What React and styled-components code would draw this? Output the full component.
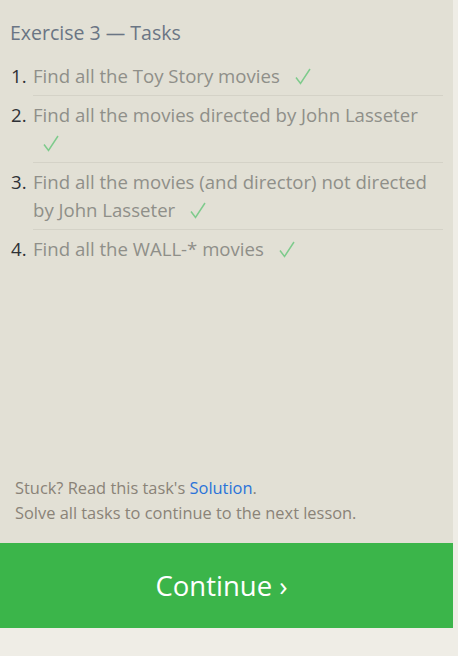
import React from 'react'
import styled, { createGlobalStyle } from 'styled-components'

const GlobalStyle = createGlobalStyle`
  html, body {
    margin: 0;
    padding: 0;
    background: #efede6;
  }
  body {
    font-family: "Open Sans", "Noto Sans", sans-serif;
  }
`

const Page = styled.div`
  width: 458px;
  height: 656px;
  display: flex;
  flex-direction: column;
`

const Panel = styled.div`
  width: 453px;
  height: 628px;
  background: #e2e0d5;
  display: flex;
  flex-direction: column;
`

const Body = styled.div`
  flex: 1;
  display: flex;
  flex-direction: column;
  padding: 20px 10px 0 10px;
`

const Title = styled.h2`
  margin: 0 0 11px 0;
  font-size: 19.5px;
  font-weight: 400;
  color: #6a7584;
  line-height: 26px;
`

const List = styled.ol`
  margin: 0;
  padding: 0 0 0 23px;
  list-style: none;
  counter-reset: task;
`

const Item = styled.li`
  position: relative;
  counter-increment: task;
  padding: 5px 0;
  border-bottom: ${p => (p.last ? 'none' : '1px solid #d4d2c7')};
  font-size: 18.6px;
  line-height: 28px;
  color: #8f8f89;

  &::before {
    content: counter(task) ".";
    position: absolute;
    left: -22px;
    color: #2e3136;
  }
`

const Check = styled.svg`
  display: inline-block;
  width: 16px;
  height: 17px;
  margin-left: 10px;
  vertical-align: -2px;
`

const Footer = styled.div`
  margin-top: auto;
  padding: 0 15px 18px 15px;
  font-size: 16.4px;
  line-height: 25px;
  color: #8a8378;
`

const Link = styled.a`
  color: #2a73d9;
  text-decoration: none;
`

const Continue = styled.button`
  height: 85px;
  border: none;
  background: #3bb54a;
  color: #ffffff;
  font-family: inherit;
  font-size: 27.5px;
  cursor: pointer;
  display: flex;
  align-items: center;
  justify-content: center;
  padding: 0 10px 0 0;
`

const Tick = () => (
  <Check viewBox="0 0 16 17">
    <path d="M1 9.5 L5.5 15.5 L15 1" fill="none" stroke="#7ecb8c" strokeWidth="1.5" />
  </Check>
)

const tasks = [
  'Find all the Toy Story movies',
  'Find all the movies directed by John Lasseter',
  'Find all the movies (and director) not directed by John Lasseter',
  'Find all the WALL-* movies',
]

export default function App() {
  return (
    <Page>
      <GlobalStyle />
      <Panel>
        <Body>
          <Title>Exercise 3 — Tasks</Title>
          <List>
            {tasks.map((t, i) => (
              <Item key={i} last={i === tasks.length - 1}>
                {t} <Tick />
              </Item>
            ))}
          </List>
        </Body>
        <Footer>
          Stuck? Read this task's <Link href="#">Solution</Link>.<br />
          Solve all tasks to continue to the next lesson.
        </Footer>
        <Continue>Continue ›</Continue>
      </Panel>
    </Page>
  )
}
